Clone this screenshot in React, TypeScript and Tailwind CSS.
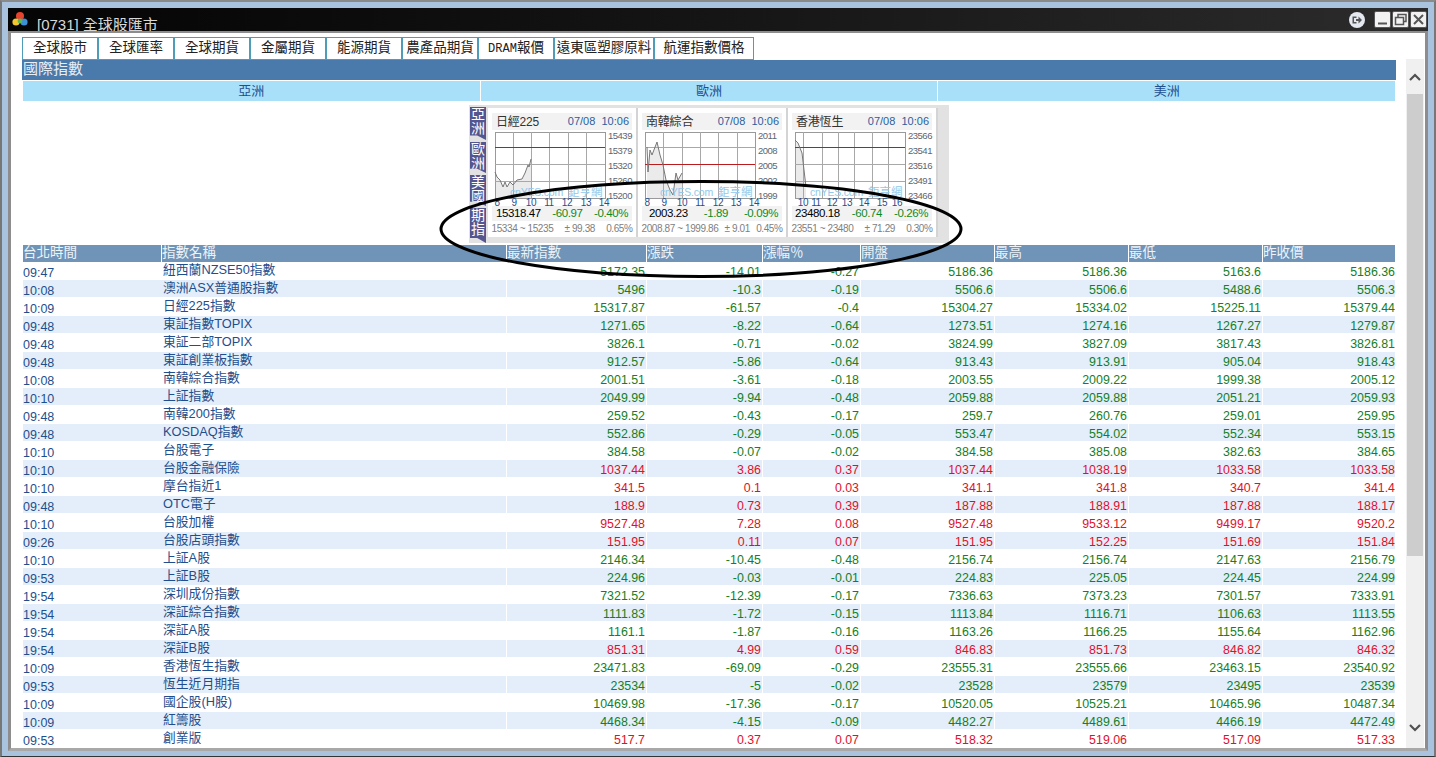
import React from 'react';

type Row = [string, string, string, string, string, string, string, string, string];

const rows: Row[] = [
  ['09:47', '紐西蘭NZSE50指數', '5172.35', '-14.01', '-0.27', '5186.36', '5186.36', '5163.6', '5186.36'],
  ['10:08', '澳洲ASX普通股指數', '5496', '-10.3', '-0.19', '5506.6', '5506.6', '5488.6', '5506.3'],
  ['10:09', '日經225指數', '15317.87', '-61.57', '-0.4', '15304.27', '15334.02', '15225.11', '15379.44'],
  ['09:48', '東証指數TOPIX', '1271.65', '-8.22', '-0.64', '1273.51', '1274.16', '1267.27', '1279.87'],
  ['09:48', '東証二部TOPIX', '3826.1', '-0.71', '-0.02', '3824.99', '3827.09', '3817.43', '3826.81'],
  ['09:48', '東証創業板指數', '912.57', '-5.86', '-0.64', '913.43', '913.91', '905.04', '918.43'],
  ['10:08', '南韓綜合指數', '2001.51', '-3.61', '-0.18', '2003.55', '2009.22', '1999.38', '2005.12'],
  ['10:10', '上証指數', '2049.99', '-9.94', '-0.48', '2059.88', '2059.88', '2051.21', '2059.93'],
  ['09:48', '南韓200指數', '259.52', '-0.43', '-0.17', '259.7', '260.76', '259.01', '259.95'],
  ['09:48', 'KOSDAQ指數', '552.86', '-0.29', '-0.05', '553.47', '554.02', '552.34', '553.15'],
  ['10:10', '台股電子', '384.58', '-0.07', '-0.02', '384.58', '385.08', '382.63', '384.65'],
  ['10:10', '台股金融保險', '1037.44', '3.86', '0.37', '1037.44', '1038.19', '1033.58', '1033.58'],
  ['10:10', '摩台指近1', '341.5', '0.1', '0.03', '341.1', '341.8', '340.7', '341.4'],
  ['09:48', 'OTC電子', '188.9', '0.73', '0.39', '187.88', '188.91', '187.88', '188.17'],
  ['10:10', '台股加權', '9527.48', '7.28', '0.08', '9527.48', '9533.12', '9499.17', '9520.2'],
  ['09:26', '台股店頭指數', '151.95', '0.11', '0.07', '151.95', '152.25', '151.69', '151.84'],
  ['10:10', '上証A股', '2146.34', '-10.45', '-0.48', '2156.74', '2156.74', '2147.63', '2156.79'],
  ['09:53', '上証B股', '224.96', '-0.03', '-0.01', '224.83', '225.05', '224.45', '224.99'],
  ['19:54', '深圳成份指數', '7321.52', '-12.39', '-0.17', '7336.63', '7373.23', '7301.57', '7333.91'],
  ['19:54', '深証綜合指數', '1111.83', '-1.72', '-0.15', '1113.84', '1116.71', '1106.63', '1113.55'],
  ['19:54', '深証A股', '1161.1', '-1.87', '-0.16', '1163.26', '1166.25', '1155.64', '1162.96'],
  ['19:54', '深証B股', '851.31', '4.99', '0.59', '846.83', '851.73', '846.82', '846.32'],
  ['10:09', '香港恆生指數', '23471.83', '-69.09', '-0.29', '23555.31', '23555.66', '23463.15', '23540.92'],
  ['09:53', '恆生近月期指', '23534', '-5', '-0.02', '23528', '23579', '23495', '23539'],
  ['10:09', '國企股(H股)', '10469.98', '-17.36', '-0.17', '10520.05', '10525.21', '10465.96', '10487.34'],
  ['10:09', '紅籌股', '4468.34', '-4.15', '-0.09', '4482.27', '4489.61', '4466.19', '4472.49'],
  ['09:53', '創業版', '517.7', '0.37', '0.07', '518.32', '519.06', '517.09', '517.33'],
];

const tabs = [
  { label: '全球股市', w: 'w-[76px]' },
  { label: '全球匯率', w: 'w-[76px]' },
  { label: '全球期貨', w: 'w-[76px]' },
  { label: '金屬期貨', w: 'w-[76px]' },
  { label: '能源期貨', w: 'w-[76px]' },
  { label: '農產品期貨', w: 'w-[76px]' },
  { label: '報價', mono: 'DRAM', w: 'w-[76px]' },
  { label: '遠東區塑膠原料', w: 'w-[100px]' },
  { label: '航運指數價格', w: 'w-[100px]' },
];

const colW = ['w-[138px]', 'w-[345px]', 'w-[140px]', 'w-[116px]', 'w-[98px]', 'w-[134px]', 'w-[134px]', 'w-[134px]', 'w-[133px]'];
const headers = ['台北時間', '指數名稱', '最新指數', '漲跌', '漲幅％', '開盤', '最高', '最低', '昨收價'];

type ChartData = {
  name: string;
  axis: string[];
  hours: [string, number][];
  vlines: number[];
  red: number;
  line: [number, number][];
  price: string;
  diff: string;
  pct: string;
  pad: string;
  range: string;
  amp: string;
  ampPct: string;
};

const charts: ChartData[] = [
  {
    name: '日經225',
    axis: ['15439', '15379', '15320', '15260', '15200'],
    hours: [['8', 2], ['9', 19], ['10', 36], ['11', 54], ['12', 72], ['13', 91], ['14', 109]],
    vlines: [18, 36, 54, 73, 91],
    red: 15,
    line: [[0, 40], [2, 45], [5, 48], [8, 55], [10, 50], [12, 55], [15, 50], [18, 53], [22, 48], [27, 47], [30, 41], [33, 33], [34, 35], [36, 27]],
    price: '15318.47',
    diff: '-60.97',
    pct: '-0.40%',
    pad: 'pl-[4px] pr-[4px]',
    range: '15334 ~ 15235',
    amp: '± 99.38',
    ampPct: '0.65%',
  },
  {
    name: '南韓綜合',
    axis: ['2011', '2008', '2005', '2002', '1999'],
    hours: [['8', 2], ['9', 19], ['10', 37], ['11', 55], ['12', 73], ['13', 91], ['14', 109]],
    vlines: [18, 37, 55, 73, 92],
    red: 32,
    line: [[2, 15], [3, 40], [5, 18], [7, 23], [12, 10], [15, 23], [18, 33], [21, 48], [25, 58], [28, 63], [31, 41], [33, 48], [37, 41]],
    price: '2003.23',
    diff: '-1.89',
    pct: '-0.09%',
    pad: 'pl-[7px] pr-[4px]',
    range: '2008.87 ~ 1999.86',
    amp: '± 9.01',
    ampPct: '0.45%',
  },
  {
    name: '香港恆生',
    axis: ['23566', '23541', '23516', '23491', '23466'],
    hours: [['10', 8], ['11', 21], ['12', 37], ['13', 52], ['14', 69], ['15', 87], ['16', 102]],
    vlines: [8, 27, 43, 59, 77, 93],
    red: 15,
    line: [[0, 8], [3, 11], [7, 21], [9, 38], [11, 55]],
    price: '23480.18',
    diff: '-60.74',
    pct: '-0.26%',
    pad: 'pl-[3px] pr-[4px]',
    range: '23551 ~ 23480',
    amp: '± 71.29',
    ampPct: '0.30%',
  },
];

const MiniChart = ({ c }: { c: ChartData }) => {
  const pts = c.line.map(([x, y]) => `${x},${y}`).join(' ');
  const last = c.line[c.line.length - 1];
  const area = `${c.line[0][0]},66 ${pts} ${last[0]},66`;
  return (
    <svg width="142" height="74" viewBox="0 0 142 74" className="block overflow-visible">
      <polygon points={area} fill="#ebebeb" />
      <rect x="0.5" y="0.5" width="110" height="66" fill="none" stroke="#9a9a9a" />
      {c.vlines.map((x) => (
        <line key={x} x1={x + 0.5} x2={x + 0.5} y1="0" y2="66" stroke="#a8a8a8" />
      ))}
      {[15, 32, 49].map((y) => (
        <line key={y} x1="0" x2="110" y1={y + 0.5} y2={y + 0.5} stroke="#a8a8a8" />
      ))}
      <line x1="0" x2="110" y1={c.red + 0.5} y2={c.red + 0.5} stroke="#b81c1c" />
      <polyline points={pts} fill="none" stroke="#777777" />
      <text x="15" y="64" fontSize="10.5" letterSpacing="-0.2" fill="#93c8ea">cnYES.com</text>
      <text x="73" y="64" fontSize="11.5" fill="#93c8ea">鉅亨網</text>
      {c.axis.map((t, i) => (
        <text key={t} x="113" y={7 + i * 15} fontSize="9.5" letterSpacing="-0.5" fill="#5c6670">{t}</text>
      ))}
      {c.hours.map(([t, x]) => (
        <text key={t} x={x} y="73.5" textAnchor="middle" fontSize="10" letterSpacing="-0.4" fill="#1f4e8c">{t}</text>
      ))}
    </svg>
  );
};

const ChartPanel = ({ c }: { c: ChartData }) => (
  <div className="flex h-[129px] w-[150px] flex-col items-center border-r-2 border-[#d4d4d4] bg-white pt-[5px]">
    <div className="flex h-[17px] w-[140px] items-center justify-between whitespace-nowrap bg-[#f2f2f2] pl-[4px] pr-[3px]">
      <span className="text-[12px] tracking-[-0.2px] text-[#333333]">{c.name}</span>
      <span className="text-[11px] text-[#2a5f9e]">07/08&nbsp;&nbsp;10:06</span>
    </div>
    <div className="w-[136px] pl-px pt-[2px]">
      <MiniChart c={c} />
    </div>
    <div className={`flex h-[15px] w-[140px] items-center justify-between whitespace-nowrap bg-[#f2f2f2] text-[11.5px] tracking-[-0.4px] ${c.pad}`}>
      <span className="text-black">{c.price}</span>
      <span className="text-[#0d8a1e]">{c.diff}</span>
      <span className="text-[#0d8a1e]">{c.pct}</span>
    </div>
    <div className="flex w-[141px] justify-between whitespace-nowrap pt-px text-[10px] leading-[13px] tracking-[-0.4px] text-[#808080]">
      <span>{c.range}</span>
      <span>{c.amp}</span>
      <span>{c.ampPct}</span>
    </div>
  </div>
);

const SideTab = ({ a, b, h }: { a: string; b: string; h: string }) => (
  <div className={`${h} flex w-[16px] flex-col items-center bg-[#55558f] text-[14px] leading-[14px] text-white [clip-path:polygon(0_0,100%_0,100%_100%,45%_86%,0_86%)]`}>
    <span>{a}</span>
    <span>{b}</span>
  </div>
);

const Logo = () => (
  <svg width="16" height="16" viewBox="0 0 16 16">
    <circle cx="8" cy="5" r="4" fill="#e8432e" />
    <circle cx="4" cy="11" r="3.6" fill="#f3c52f" />
    <circle cx="12" cy="11" r="3.6" fill="#3d8fd6" />
    <circle cx="8" cy="10" r="2.4" fill="#5ab947" />
  </svg>
);

const WinBtn = ({ children }: { children: React.ReactNode }) => (
  <div className="flex h-[17px] w-[17px] items-center justify-center rounded-[2px] border border-[#555555] bg-[#f2f2f2]">
    <svg width="13" height="13" viewBox="0 0 13 13" fill="none" stroke="#555555" strokeWidth="1.5">
      {children}
    </svg>
  </div>
);

const App = () => {
  return (
    <div className="relative h-[757px] w-[1436px] overflow-hidden border-x-2 border-t-2 border-b border-x-[#777777] border-t-[#8a8a8a] border-b-[#333333] bg-[#a9c3de] px-[6px] pb-[5px] pt-[6px] font-['Liberation_Sans','Noto_Sans_CJK_TC',sans-serif]">
      <div className="flex h-full flex-col">
        {/* Title bar */}
        <div className="flex h-[23px] shrink-0 items-start overflow-hidden bg-gradient-to-r from-[#050505] via-[#151515] to-[#2c2c2c]">
          <div className="ml-[4px] mt-[3px]">
            <Logo />
          </div>
          <span className="ml-[9px] mt-[8px] text-[15px] leading-[18px] text-[#d8d8d8]">[0731] 全球股匯市</span>
          <div className="ml-auto mt-[3px] flex items-center">
            <div className="mr-[9px] mt-px flex h-[16px] w-[16px] items-center justify-center rounded-full bg-[#e4e8f0]">
              <svg width="12" height="12" viewBox="0 0 12 12">
                <path d="M1.5 2.5h4v1.5h-2.5v4h2.5v1.5h-4z" fill="#555555" />
                <path d="M5 5h2.5v-2.5l3.5 3.5-3.5 3.5v-2.5h-2.5z" fill="#555555" />
              </svg>
            </div>
            <div className="flex gap-px pr-px">
              <WinBtn>
                <path d="M2 10.5h9" strokeWidth="2" />
              </WinBtn>
              <WinBtn>
                <rect x="1.5" y="4.5" width="8" height="7" />
                <path d="M4 4V1.5h8v7h-2.5" />
              </WinBtn>
              <WinBtn>
                <path d="M2 2l9 9M11 2l-9 9" strokeWidth="2" />
              </WinBtn>
            </div>
          </div>
        </div>

        {/* Body */}
        <div className="flex min-h-0 flex-1 border-x-[3px] border-b-[3px] border-t-[2px] border-l-[#8d8d8d] border-r-[#8d8d8d] border-t-[#8d8d8d] border-b-[#a8a8a8] bg-white">
          <div className="w-[1395px] shrink-0 pl-[11px] pt-[4px]">
            {/* Tabs */}
            <div className="flex h-[23px]">
              {tabs.map((t) => (
                <div
                  key={t.label}
                  className={`${t.w} flex items-center justify-center whitespace-nowrap border border-[#4f9cb8] text-[13.5px] text-[#222222]`}
                >
                  {t.mono && <span className="font-['Liberation_Mono'] text-[12px]">{t.mono}</span>}
                  {t.label}
                </div>
              ))}
            </div>
            <div className="flex h-[20px] w-[1374px] items-center bg-[#4a7aab] pb-[2px] pl-px text-[15px] text-[#e8eef6]">國際指數</div>

            {/* Regions */}
            <div className="ml-px mt-px flex h-[20px] w-[1372px]">
              {['亞洲', '歐洲', '美洲'].map((r) => (
                <div key={r} className="flex flex-1 items-center justify-center border-r border-white bg-[#a8e0fa] text-[13px] text-[#1d4f91] last:border-r-0">
                  {r}
                </div>
              ))}
            </div>

            {/* Chart widget */}
            <div className="ml-[447px] mt-[4px] flex h-[138px] w-[480px] bg-[#e2e2e2] pl-px">
              <div className="flex w-[18px] flex-col gap-[2px] pt-[2px]">
                <SideTab a="亞" b="洲" h="h-[33px]" />
                <SideTab a="歐" b="洲" h="h-[31px]" />
                <SideTab a="美" b="國" h="h-[31px]" />
                <SideTab a="期" b="指" h="h-[35px]" />
              </div>
              <div className="flex pt-[3px]">
                {charts.map((c) => (
                  <ChartPanel key={c.name} c={c} />
                ))}
              </div>
            </div>

            {/* Quote table */}
            <div className="ml-px mt-[2px] w-[1372px]">
              <div className="flex h-[17px] bg-[#7094b8] text-[13.5px] leading-[15px] text-[#eef3f8]">
                {headers.map((h, i) => (
                  <div key={h} className={`${colW[i]} truncate border-l border-white first:border-l-0`}>
                    {h}
                  </div>
                ))}
              </div>
              {rows.map((row, i) => {
                const up = !row[3].startsWith('-');
                return (
                  <div key={row[1]} className={`flex h-[18px] ${i % 2 === 1 ? 'bg-[#e3eefa]' : 'bg-white'} border-b border-white`}>
                    <div className={`${colW[0]} pt-[4px] text-[12.5px] leading-[14px] text-[#1f4e8c]`}>{row[0]}</div>
                    <div className={`${colW[1]} pl-[2px] text-[12.8px] leading-[16px] text-[#1f4e8c]`}>{row[1]}</div>
                    {row.slice(2).map((v, j) => (
                      <div
                        key={j}
                        className={`${colW[j + 2]} border-l border-white pr-px pt-[3px] text-right text-[12.4px] leading-[15px] last:pr-0 ${up ? 'text-[#e0102a]' : 'text-[#128024]'}`}
                      >
                        {v}
                      </div>
                    ))}
                  </div>
                );
              })}
            </div>
          </div>

          {/* Scrollbar */}
          <div className="mt-[26px] flex w-[18px] shrink-0 flex-col bg-[#f0f0f0]">
            <div className="flex h-[35px] items-center justify-center">
              <svg width="12" height="8" viewBox="0 0 12 8" fill="none" stroke="#505050" strokeWidth="2.2">
                <path d="M1 7l5-5 5 5" />
              </svg>
            </div>
            <div className="mx-px h-[462px] bg-[#cdcdcd]" />
            <div className="flex flex-1 items-end justify-center pb-[16px]">
              <svg width="12" height="8" viewBox="0 0 12 8" fill="none" stroke="#505050" strokeWidth="2.2">
                <path d="M1 1l5 5 5-5" />
              </svg>
            </div>
          </div>
        </div>
      </div>

      {/* Hand-drawn ellipse on top of the page */}
      <svg className="pointer-events-none absolute left-[434px] top-[176px]" width="532" height="106" viewBox="0 0 532 106" fill="none">
        <ellipse cx="265" cy="51" rx="260" ry="47.5" stroke="black" strokeWidth="3" />
      </svg>
    </div>
  );
};

export default App;
